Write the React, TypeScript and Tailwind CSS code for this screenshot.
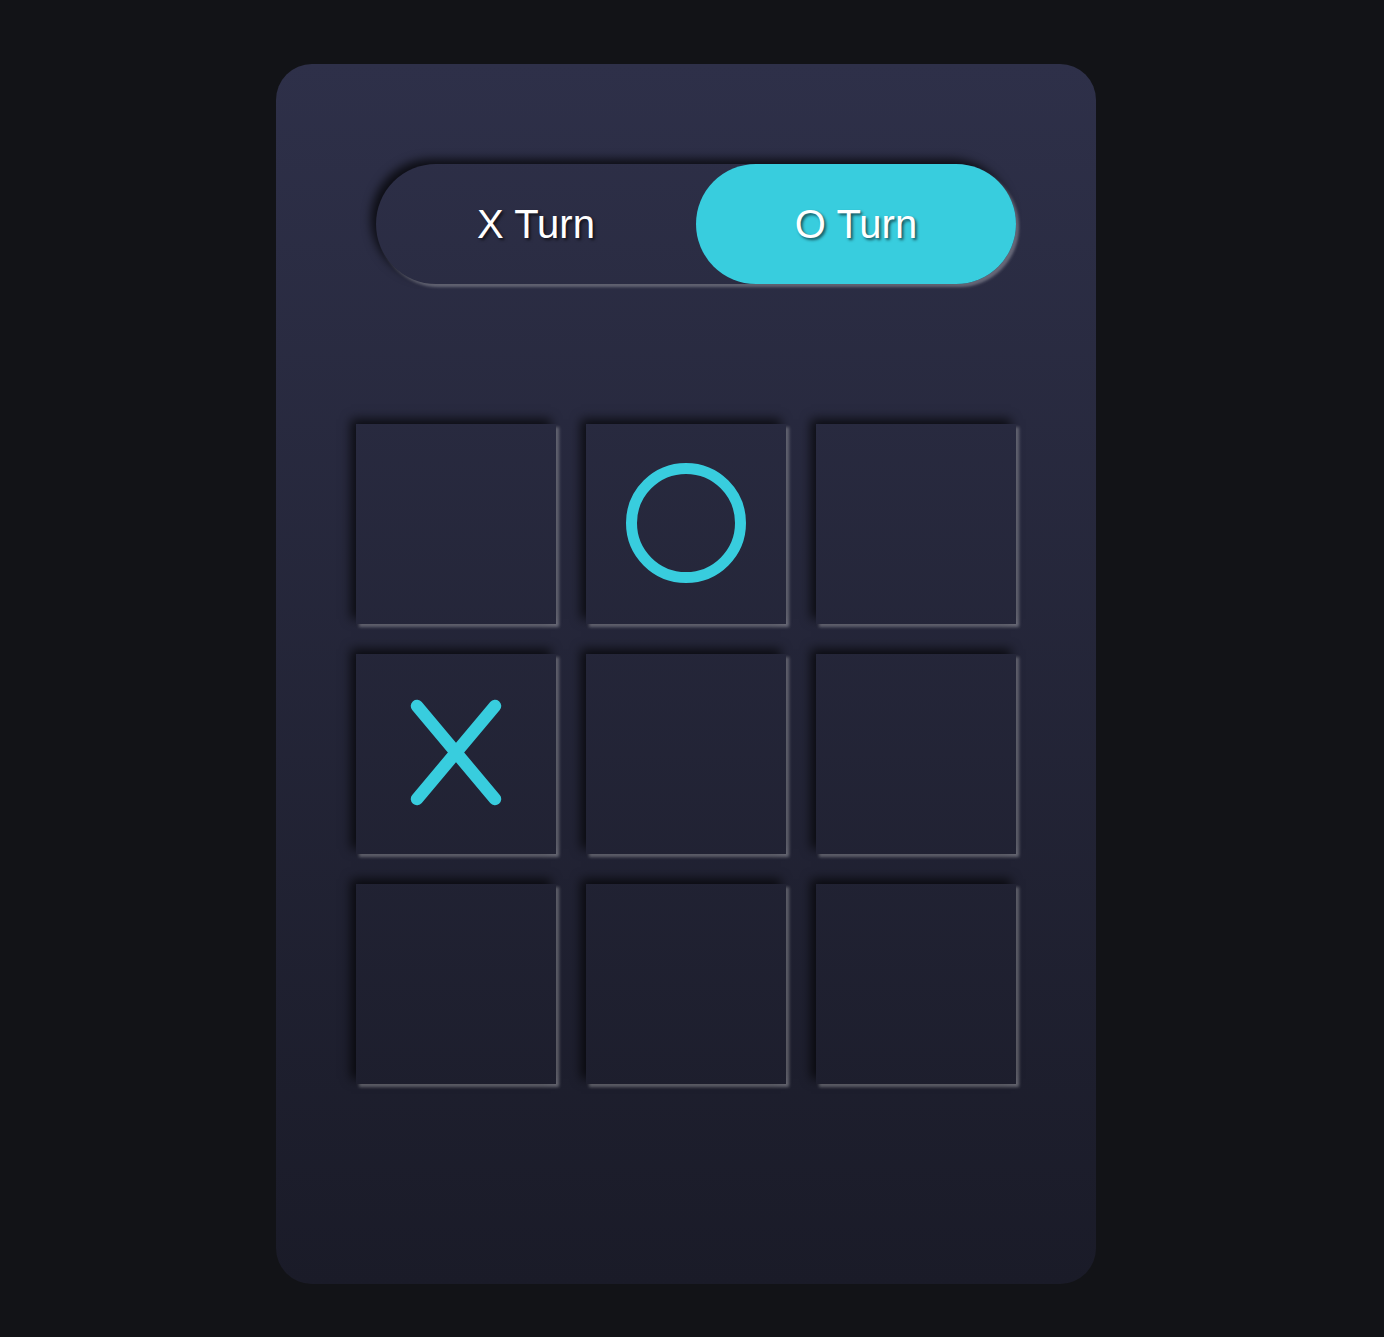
import { useState } from 'react';

type Mark = 'X' | 'O' | null;

const XMark = () => (
    <svg width="200" height="200" viewBox="0 0 200 200">
        <path d="M61 52 L139 145 M139 52 L61 145" stroke="#38cdde" strokeWidth="12.5" strokeLinecap="round" fill="none" />
    </svg>
);

const OMark = () => (
    <svg width="200" height="200" viewBox="0 0 200 200">
        <circle cx="100" cy="99" r="54.5" stroke="#38cdde" strokeWidth="11" fill="none" />
    </svg>
);

const App: React.FC = () => {
    const [turn, setTurn] = useState<'X' | 'O'>('O');
    const [board, setBoard] = useState<Mark[]>([null, 'O', null, 'X', null, null, null, null, null]);

    const play = (i: number) => {
        if (board[i]) return;
        const next = [...board];
        next[i] = turn;
        setBoard(next);
        setTurn(turn === 'X' ? 'O' : 'X');
    };

    return (
        <div className="min-h-screen w-full bg-[#121317] pt-16 pb-[53px] pr-3 flex justify-center font-['Liberation_Sans',Arial,sans-serif]">
            <div className="w-[820px] h-[1220px] rounded-[36px] bg-gradient-to-b from-[#2e3049] to-[#1a1b28] px-20 pt-[100px] flex flex-col">
                {/* Turn toggle */}
                <div className="ml-5 w-[640px] h-[120px] rounded-full flex shadow-[-5px_-5px_10px_rgba(0,0,0,0.7),3px_3px_3px_rgba(255,255,255,0.3)]">
                    {(['X', 'O'] as const).map((t) => (
                        <button
                            key={t}
                            onClick={() => setTurn(t)}
                            className={`flex-1 h-full rounded-full flex items-center justify-center text-[40px] text-white [text-shadow:2px_2px_3px_rgba(0,0,0,0.6)] ${
                                turn === t ? 'bg-[#38cdde]' : 'bg-transparent'
                            }`}
                        >
                            {t} Turn
                        </button>
                    ))}
                </div>

                {/* Board */}
                <div className="mt-[140px] grid grid-cols-[repeat(3,200px)] gap-[30px]">
                    {board.map((cell, i) => (
                        <button
                            key={i}
                            onClick={() => play(i)}
                            className="w-[200px] h-[200px] flex items-center justify-center shadow-[-5px_-5px_10px_rgba(0,0,0,0.7),3px_3px_3px_rgba(255,255,255,0.32)]"
                        >
                            {cell === 'X' && <XMark />}
                            {cell === 'O' && <OMark />}
                        </button>
                    ))}
                </div>
            </div>
        </div>
    );
};

export default App;
